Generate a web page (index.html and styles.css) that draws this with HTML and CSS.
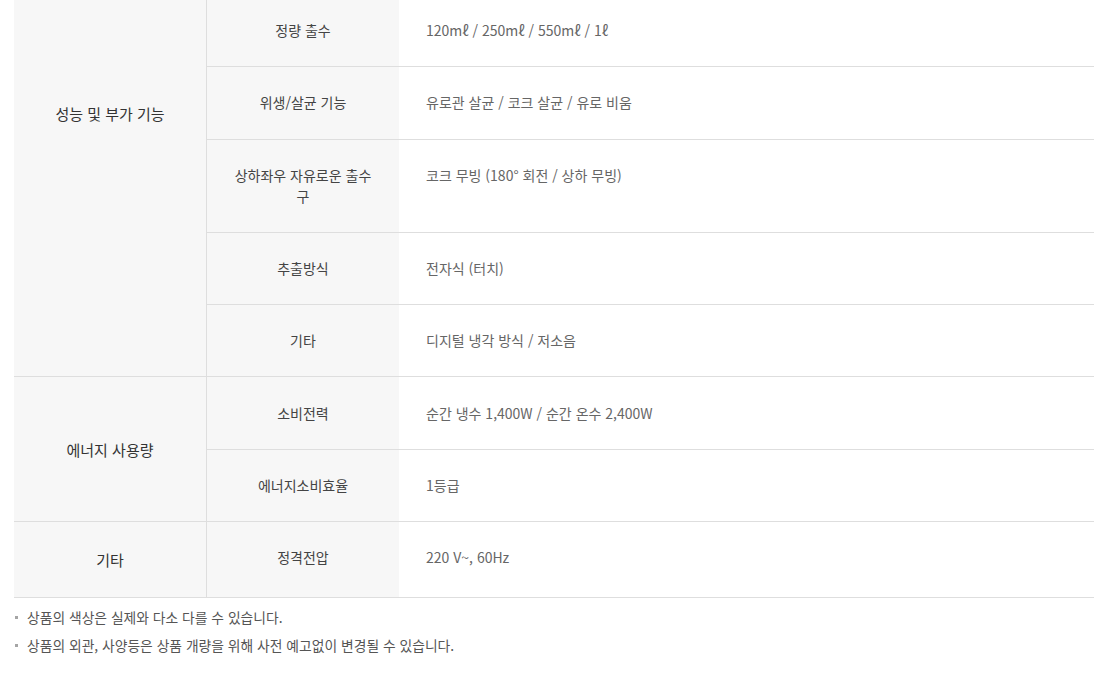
FILE: index.html
```html
<!DOCTYPE html>
<html lang="ko">
<head>
<meta charset="utf-8">
<link rel="stylesheet" href="styles.css">
</head>
<body>
<div class="spec">
  <table class="spec-table">
    <colgroup>
      <col class="col-group">
      <col class="col-name">
      <col class="col-value">
    </colgroup>
    <tbody>
      <tr>
        <th class="group group-first" rowspan="5">성능 및 부가 기능</th>
        <th class="name">정량 출수</th>
        <td class="value">120mℓ / 250mℓ / 550mℓ / 1ℓ</td>
      </tr>
      <tr>
        <th class="name">위생/살균 기능</th>
        <td class="value">유로관 살균 / 코크 살균 / 유로 비움</td>
      </tr>
      <tr>
        <th class="name">상하좌우 자유로운 출수구</th>
        <td class="value">코크 무빙 (180° 회전 / 상하 무빙)</td>
      </tr>
      <tr>
        <th class="name">추출방식</th>
        <td class="value">전자식 (터치)</td>
      </tr>
      <tr>
        <th class="name">기타</th>
        <td class="value">디지털 냉각 방식 / 저소음</td>
      </tr>
      <tr>
        <th class="group" rowspan="2">에너지 사용량</th>
        <th class="name">소비전력</th>
        <td class="value">순간 냉수 1,400W / 순간 온수 2,400W</td>
      </tr>
      <tr>
        <th class="name">에너지소비효율</th>
        <td class="value">1등급</td>
      </tr>
      <tr class="last">
        <th class="group">기타</th>
        <th class="name">정격전압</th>
        <td class="value">220 V~, 60Hz</td>
      </tr>
    </tbody>
  </table>
  <ul class="notes">
    <li class="note">상품의 색상은 실제와 다소 다를 수 있습니다.</li>
    <li class="note">상품의 외관, 사양등은 상품 개량을 위해 사전 예고없이 변경될 수 있습니다.</li>
  </ul>
</div>
</body>
</html>
```
FILE: styles.css
```css
html, body {
  margin: 0;
  padding: 0;
  background: #fff;
}
body {
  font-family: "Noto Sans CJK KR", "Noto Sans", sans-serif;
  font-size: 14px;
  line-height: 21px;
  color: #333;
}
.spec {
  padding: 0 16px 0 14px;
}
.spec-table {
  width: 1080px;
  margin-top: -5px;
  border-collapse: separate;
  border-spacing: 0;
  table-layout: fixed;
}
.col-group { width: 193px; }
.col-name { width: 192px; }
.spec-table th,
.spec-table td {
  box-sizing: border-box;
  padding: 25.15px 27px;
  border-bottom: 1px solid #dedede;
  vertical-align: top;
  font-weight: 400;
}
.group {
  background: #f7f7f7;
  border-right: 1px solid #dedede;
  text-align: center;
  vertical-align: middle !important;
  font-size: 15px;
  color: #333;
}
.group-first {
  vertical-align: top !important;
  padding-top: 108px !important;
}
.name {
  background: #f7f7f7;
  text-align: center;
  color: #444;
}
.value {
  text-align: left;
  color: #666;
}
.last th,
.last td {
  padding-bottom: 29px;
}
.last .group {
  padding-bottom: 25px;
}
.notes {
  list-style: none;
  margin: 5px 0 0;
  padding: 0;
}
.note {
  position: relative;
  line-height: 28px;
  padding-left: 13px;
  font-size: 13.8px;
  color: #555;
}
.note::before {
  content: "";
  position: absolute;
  left: 1px;
  top: 13px;
  width: 3px;
  height: 3px;
  background: #a5a5a5;
}
```
